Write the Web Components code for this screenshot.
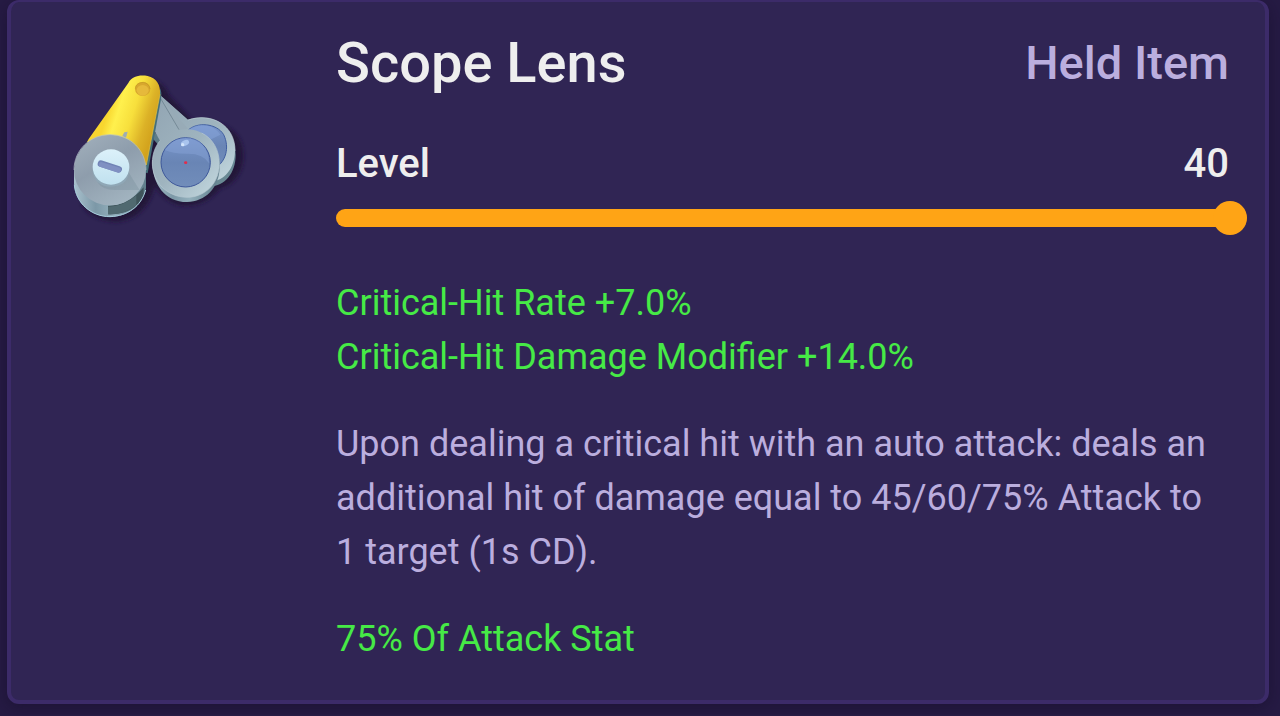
<!DOCTYPE html>
<html lang="en">
<head>
<meta charset="utf-8">
<meta name="viewport" content="width=device-width, initial-scale=1">
<title>Scope Lens</title>
<style>
  body {
    background-color: #261b44;
    color: #eee;
    font-family: Roboto, "Liberation Sans", sans-serif;
    margin: 0;
  }
</style>
</head>
<body>

<item-card name="Scope Lens" type="Held Item">
  <scope-lens-icon slot="icon"></scope-lens-icon>
  <level-slider label="Level" max="40" value="40"></level-slider>
  <stat-text tone="bonus">Critical-Hit Rate +7.0%<br>Critical-Hit Damage Modifier +14.0%</stat-text>
  <stat-text>Upon dealing a critical hit with an auto attack: deals an additional hit of damage equal to 45/60/75% Attack to 1 target (1s CD).</stat-text>
  <stat-text tone="bonus">75% Of Attack Stat</stat-text>
</item-card>

<script>
const cardTemplate = document.createElement('template');
cardTemplate.innerHTML = /* html */`
<article class="card">
  <div class="icon"><slot name="icon"></slot></div>
  <div class="content">
    <header>
      <h1 id="name"></h1>
      <span class="type" id="type"></span>
    </header>
    <slot></slot>
  </div>
</article>

<style>
  :host {
    display: block;
    padding: 0 11px 11px 7px;
  }

  .card {
    background-color: #302554;
    border: 4px solid #3c2b69;
    border-radius: 12px;
    border-top-width: 2px;
    box-shadow: 0 4px 16px rgba(20, 12, 40, 0.5);
    display: grid;
    gap: 76px;
    grid-template-columns: 200px 1fr;
    padding: 25px 36px 34px 49px;
  }

  .icon {
    padding-top: 33px;
  }

  .content {
    display: flex;
    flex-direction: column;
    gap: 33px;
    min-width: 0;
  }

  header {
    align-items: center;
    display: flex;
    justify-content: space-between;
  }

  h1 {
    font-size: 56px;
    font-weight: 500;
    line-height: 72px;
    margin: 0;
  }

  .type {
    color: #bbaede;
    font-size: 47px;
    font-weight: 500;
    line-height: 72px;
  }
</style>
`;

class ItemCard extends HTMLElement {

  constructor() {
    super();
    this.attachShadow({ mode: 'open' });
    this.shadowRoot.appendChild(cardTemplate.content.cloneNode(true));
  }

  connectedCallback() {
    this.shadowRoot.getElementById('name').textContent = this.getAttribute('name');
    this.shadowRoot.getElementById('type').textContent = this.getAttribute('type');
  }

}

const sliderTemplate = document.createElement('template');
sliderTemplate.innerHTML = /* html */`
<div class="row">
  <label for="range" id="label"></label>
  <output for="range" id="value"></output>
</div>
<input id="range" type="range" min="1" />

<style>
  :host {
    display: block;
    padding: 2px 0 8px;
  }

  .row {
    display: flex;
    font-size: 40px;
    font-weight: 500;
    justify-content: space-between;
    line-height: 60px;
    margin-bottom: 7px;
  }

  /* the thumb hangs over the end of the track by half its width */
  input {
    -webkit-appearance: none;
    appearance: none;
    background: none;
    cursor: pointer;
    display: block;
    height: 34px;
    margin: 0;
    width: calc(100% + 18px);
  }
  input::-webkit-slider-runnable-track {
    background: linear-gradient(#ffa415, #ffa415) left / calc(var(--fill) - 9px) 18px no-repeat,
      linear-gradient(#80582f, #80582f) left / 100% 18px no-repeat;
    border-radius: 9px;
    height: 18px;
  }
  input::-webkit-slider-thumb {
    -webkit-appearance: none;
    background-color: #ffa415;
    border-radius: 50%;
    height: 34px;
    margin-top: -8px;
    width: 34px;
  }
</style>
`;

class LevelSlider extends HTMLElement {

  constructor() {
    super();
    this.attachShadow({ mode: 'open' });
    this.shadowRoot.appendChild(sliderTemplate.content.cloneNode(true));
    this.range = this.shadowRoot.getElementById('range');
    this.range.addEventListener('input', () => this.update());
  }

  connectedCallback() {
    this.shadowRoot.getElementById('label').textContent = this.getAttribute('label');
    this.range.max = this.getAttribute('max');
    this.range.value = this.getAttribute('value');
    this.update();
  }

  update() {
    const { min, max, value } = this.range;
    this.shadowRoot.getElementById('value').textContent = value;
    this.range.style.setProperty('--fill', `${(value - min) / (max - min) * 100}%`);
  }

}

const textTemplate = document.createElement('template');
textTemplate.innerHTML = /* html */`
<p><slot></slot></p>

<style>
  :host {
    color: #bbaede;
    display: block;
  }
  :host([tone="bonus"]) {
    color: #46ea46;
  }

  p {
    font-size: 36px;
    line-height: 54px;
    margin: 0;
  }
</style>
`;

class StatText extends HTMLElement {

  constructor() {
    super();
    this.attachShadow({ mode: 'open' });
    this.shadowRoot.appendChild(textTemplate.content.cloneNode(true));
  }

}

const iconTemplate = document.createElement('template');
iconTemplate.innerHTML = /* html */`
<svg viewBox="0 0 600 510" role="img" aria-label="Scope Lens">
  <defs>
    <linearGradient id="yellow" gradientUnits="userSpaceOnUse" x1="145" y1="150" x2="285" y2="195">
      <stop offset="0" stop-color="#f8d62f" />
      <stop offset="0.2" stop-color="#fff04d" />
      <stop offset="0.5" stop-color="#f7df3c" />
      <stop offset="0.8" stop-color="#dcb227" />
      <stop offset="1" stop-color="#d3a31d" />
    </linearGradient>
    <linearGradient id="steel" x1="0" y1="0" x2="0.6" y2="1">
      <stop offset="0" stop-color="#a3b1bd" />
      <stop offset="0.5" stop-color="#8e9dac" />
      <stop offset="1" stop-color="#a1b3bf" />
    </linearGradient>
    <linearGradient id="side" x1="0" y1="0" x2="1" y2="0">
      <stop offset="0" stop-color="#a9c1cd" />
      <stop offset="0.3" stop-color="#7c98a7" />
      <stop offset="0.55" stop-color="#93b0bc" />
      <stop offset="1" stop-color="#5f7d8b" />
    </linearGradient>
    <linearGradient id="rim" x1="0" y1="0" x2="0.8" y2="1">
      <stop offset="0" stop-color="#91a4b2" />
      <stop offset="0.6" stop-color="#9fb4bf" />
      <stop offset="1" stop-color="#bdd2da" />
    </linearGradient>
    <linearGradient id="glass" x1="0" y1="0" x2="0" y2="1">
      <stop offset="0" stop-color="#7895cb" />
      <stop offset="0.5" stop-color="#6985b5" />
      <stop offset="1" stop-color="#718dba" />
    </linearGradient>
    <linearGradient id="knob" x1="0" y1="0" x2="0" y2="1">
      <stop offset="0" stop-color="#dcf1fa" />
      <stop offset="1" stop-color="#c0e1ef" />
    </linearGradient>
    <filter id="soft" x="-20%" y="-20%" width="140%" height="140%">
      <feGaussianBlur stdDeviation="7" />
    </filter>
  </defs>

  <!-- shadow -->
  <g fill="#211638" filter="url(#soft)">
    <path d="M240 60Q310 55 325 105L400 185Q550 180 550 290Q545 365 480 385Q430 445 360 435Q315 425 285 375Q260 475 170 485Q90 480 65 430Z" />
  </g>

  <!-- rear lens -->
  <path d="M300 105L384 181C455 155 527 196 527 285C527 340 494 378 450 380L340 230Z" fill="#698994" />
  <path d="M299 104L384 179C455 156 526 196 525 273C524 326 493 362 453 365L350 250L286 205Z" fill="url(#rim)" />
  <path d="M384 180C455 156 526 196 525 273" fill="none" stroke="#bdcdd4" stroke-width="2" />
  <path d="M384 211C410 185 470 189 491 224C510 264 496 305 468 322C466 265 435 216 384 211Z" fill="url(#glass)" stroke="#405ea0" stroke-width="3" />
  <path d="M386 209C410 187 460 190 481 224L448 241Q430 218 386 209Z" fill="#87a5db" opacity="0.5" />

  <!-- front lens -->
  <path d="M283 215L300 235V260L280 238Z" fill="#5d7c88" />
  <path d="M277 308C278 372 314 426 381 426C435 425 479 385 479 318V300H277Z" fill="url(#side)" />
  <path d="M299 110L356 208C430 198 480 248 478 314C476 370 437 411 381 412C320 411 277 365 277 309C277 280 287 258 300 242L282 210Z" fill="url(#rim)" />
  <path d="M300 112L358 209L384 207Z" fill="#98abb7" />
  <path d="M300 112L357 209" fill="none" stroke="#637986" stroke-width="2" />
  <path d="M300 242C287 258 277 280 277 309C277 365 320 411 381 412C437 411 476 370 478 314C479 270 458 235 425 219" fill="none" stroke="#b7c9d1" stroke-width="2" />
  <circle cx="377" cy="307" r="74" fill="url(#glass)" stroke="#3d579a" stroke-width="3" />
  <path d="M329 253C355 227 402 228 426 251Q448 277 447 310Q430 279 377 281Q338 281 314 270Z" fill="#8da8dc" opacity="0.4" />
  <ellipse cx="375" cy="249" rx="13" ry="8" fill="#a9c4ee" transform="rotate(-25 375 249)" />
  <circle cx="368" cy="254" r="5" fill="#d2e4fb" />
  <ellipse cx="377" cy="308" rx="5" ry="4" fill="#e22c4c" />

  <!-- yellow arm -->
  <path d="M300 85Q306 95 303 118L263 340L250 336Z" fill="#456f7a" />
  <path d="M205 69C216 48 239 44 263 48C288 53 303 75 300 103L259 315L81 246L86 237Z" fill="url(#yellow)" />
  <path d="M300 103L259 315" fill="none" stroke="#e6c33c" stroke-width="2" />
  <ellipse cx="248" cy="87" rx="23" ry="21" fill="#d8a72e" />
  <path d="M226 86C227 73 236 68 250 67C262 69 269 77 270 87" fill="none" stroke="#c39722" stroke-width="2" />
  <ellipse cx="248" cy="91" rx="18" ry="16" fill="#e6b93b" />

  <!-- drum -->
  <path d="M42 330V370C45 430 95 471 150 471C208 469 250 432 258 384V330Z" fill="url(#side)" />
  <path d="M144 437Q202 438 251 382V406Q223 465 144 463Z" fill="#3f545b" />
  <path d="M144 440Q190 440 229 406V436Q195 465 144 463Z" fill="#506970" />
  <path d="M43 374C47 430 95 470 150 470C203 468 243 440 257 390" fill="none" stroke="#a7cddd" stroke-width="3" />
  <path d="M187 228L193 217L203 215L198 233Z" fill="#9fadb4" />
  <ellipse cx="150" cy="330" rx="108" ry="106" fill="url(#steel)" />
  <path d="M42 330C42 270 90 224 150 224C211 224 258 271 258 330" fill="none" stroke="#b3c0c8" stroke-width="2" />
  <path d="M112 366Q128 392 171 390H239Q220 360 205 335Z" fill="#718896" opacity="0.3" />

  <!-- knob -->
  <path d="M98 323V335Q107 379 152 380Q203 378 207 335V323Z" fill="#8fa7b6" />
  <ellipse cx="153" cy="321" rx="55" ry="53" fill="url(#knob)" />
  <path d="M123 311L176 328" stroke="#7183b6" stroke-width="20" stroke-linecap="round" />
  <path d="M124 314L175 330" stroke="#8090c2" stroke-width="15" stroke-linecap="round" />
</svg>

<style>
  :host {
    display: block;
  }

  svg {
    display: block;
    width: 100%;
  }
</style>
`;

class ScopeLensIcon extends HTMLElement {

  constructor() {
    super();
    this.attachShadow({ mode: 'open' });
    this.shadowRoot.appendChild(iconTemplate.content.cloneNode(true));
  }

}

customElements.define('item-card', ItemCard);
customElements.define('level-slider', LevelSlider);
customElements.define('stat-text', StatText);
customElements.define('scope-lens-icon', ScopeLensIcon);
</script>
</body>
</html>
